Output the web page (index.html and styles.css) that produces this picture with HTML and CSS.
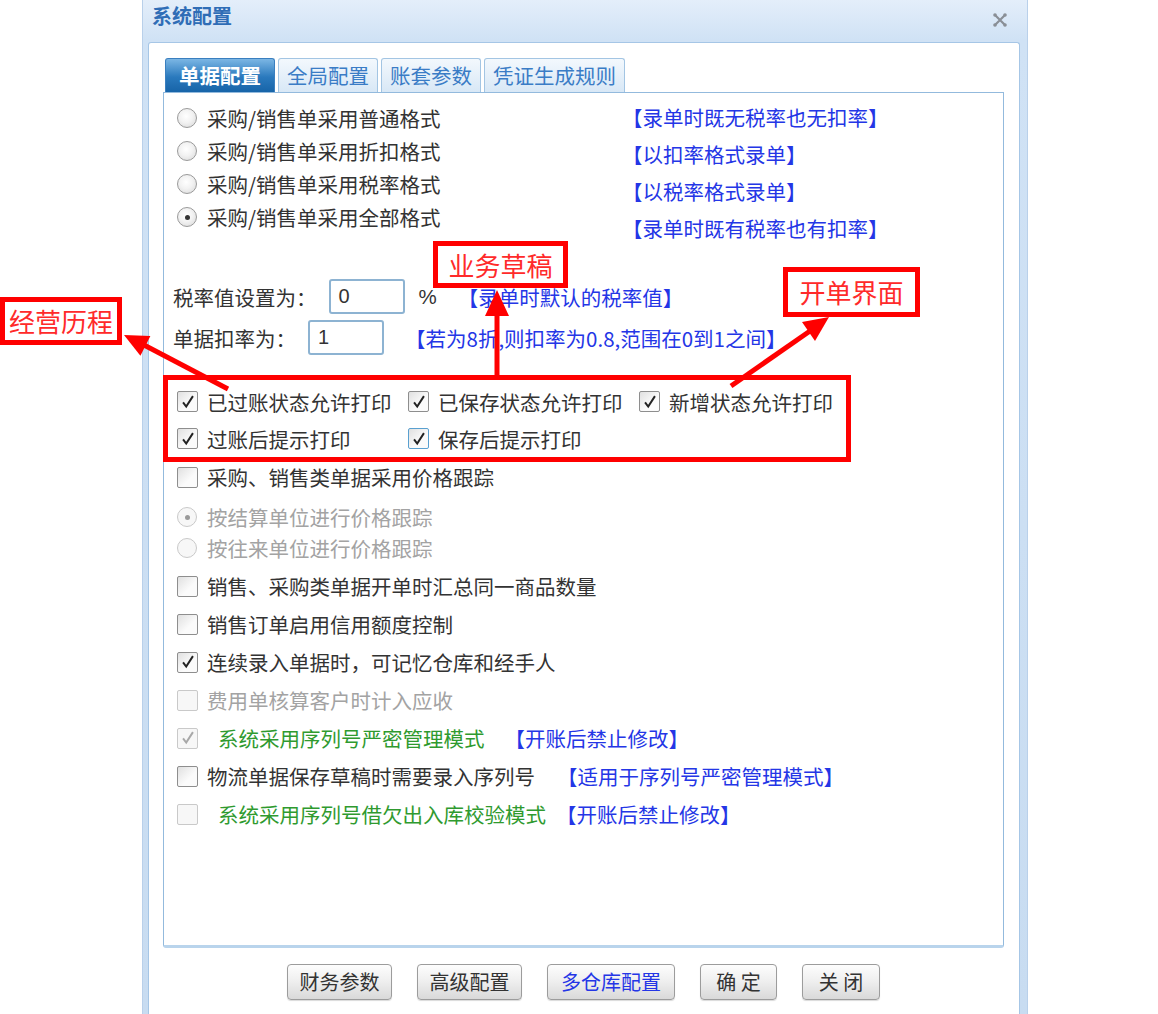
FILE: index.html
```html
<!DOCTYPE html>
<html lang="zh-CN">
<head>
  <meta charset="UTF-8" />
  <title>系统配置</title>
  <link rel="stylesheet" href="styles.css">
</head>
<body>
  <div class="window">
    <div class="titlebar">
      <span class="title">系统配置</span>
      <svg class="close" width="16" height="16" viewBox="0 0 16 16">
        <path d="M3 3 L13 13 M13 3 L3 13" stroke="#8a8f96" stroke-width="2.2" stroke-linecap="round"/>
        <circle cx="3" cy="3" r="1.8" fill="#8a8f96"/><circle cx="13" cy="3" r="1.8" fill="#8a8f96"/>
        <circle cx="3" cy="13" r="1.8" fill="#8a8f96"/><circle cx="13" cy="13" r="1.8" fill="#8a8f96"/>
      </svg>
    </div>

    <div class="content">
      <div class="tabs">
        <div class="tab active">单据配置</div>
        <div class="tab">全局配置</div>
        <div class="tab">账套参数</div>
        <div class="tab">凭证生成规则</div>
      </div>

      <div class="panel">
        <div class="formats">
          <div class="format-opts">
            <div class="opt"><span class="radio"></span>采购/销售单采用普通格式</div>
            <div class="opt"><span class="radio"></span>采购/销售单采用折扣格式</div>
            <div class="opt"><span class="radio"></span>采购/销售单采用税率格式</div>
            <div class="opt"><span class="radio on"></span>采购/销售单采用全部格式</div>
          </div>
          <div class="format-notes">
            <div class="note">【录单时既无税率也无扣率】</div>
            <div class="note">【以扣率格式录单】</div>
            <div class="note">【以税率格式录单】</div>
            <div class="note">【录单时既有税率也有扣率】</div>
          </div>
        </div>

        <div class="field tax">
          <span class="field-label">税率值设置为：</span>
          <span class="input">0</span>
          <span class="unit">%</span>
          <span class="note">【录单时默认的税率值】</span>
        </div>
        <div class="field">
          <span class="field-label">单据扣率为：</span>
          <span class="input">1</span>
          <span class="note">【若为8折,则扣率为0.8,范围在0到1之间】</span>
        </div>

        <div class="print-group">
          <div class="print-grid">
            <div class="opt"><span class="cb on"><svg viewBox="0 0 20 20"><path d="M4.5 10.5 L8 15 L15.5 3.5"/></svg></span>已过账状态允许打印</div>
            <div class="opt"><span class="cb on"><svg viewBox="0 0 20 20"><path d="M4.5 10.5 L8 15 L15.5 3.5"/></svg></span>已保存状态允许打印</div>
            <div class="opt"><span class="cb on"><svg viewBox="0 0 20 20"><path d="M4.5 10.5 L8 15 L15.5 3.5"/></svg></span>新增状态允许打印</div>
            <div class="opt"><span class="cb on"><svg viewBox="0 0 20 20"><path d="M4.5 10.5 L8 15 L15.5 3.5"/></svg></span>过账后提示打印</div>
            <div class="opt"><span class="cb on focus"><svg viewBox="0 0 20 20"><path d="M4.5 10.5 L8 15 L15.5 3.5"/></svg></span>保存后提示打印</div>
          </div>
          <div class="mark-frame"></div>
        </div>

        <div class="opt row first"><span class="cb"></span>采购、销售类单据采用价格跟踪</div>
        <div class="opt sub disabled"><span class="radio on"></span>按结算单位进行价格跟踪</div>
        <div class="opt sub disabled"><span class="radio"></span>按往来单位进行价格跟踪</div>
        <div class="opt row after-sub"><span class="cb"></span>销售、采购类单据开单时汇总同一商品数量</div>
        <div class="opt row"><span class="cb"></span>销售订单启用信用额度控制</div>
        <div class="opt row"><span class="cb on"><svg viewBox="0 0 20 20"><path d="M4.5 10.5 L8 15 L15.5 3.5"/></svg></span>连续录入单据时，可记忆仓库和经手人</div>
        <div class="opt row disabled"><span class="cb"></span>费用单核算客户时计入应收</div>
        <div class="opt row disabled"><span class="cb on"><svg viewBox="0 0 20 20"><path d="M4.5 10.5 L8 15 L15.5 3.5"/></svg></span><span class="green">系统采用序列号严密管理模式</span><span class="note">【开账后禁止修改】</span></div>
        <div class="opt row"><span class="cb"></span>物流单据保存草稿时需要录入序列号<span class="note spaced">【适用于序列号严密管理模式】</span></div>
        <div class="opt row disabled"><span class="cb"></span><span class="green tight">系统采用序列号借欠出入库校验模式</span><span class="note">【开账后禁止修改】</span></div>
      </div>

      <div class="buttons">
        <span class="btn w105">财务参数</span>
        <span class="btn w105">高级配置</span>
        <span class="btn w128 blue">多仓库配置</span>
        <span class="btn w77">确 定</span>
        <span class="btn w78">关 闭</span>
      </div>
    </div>
  </div>

  <!-- annotations drawn over the screenshot -->
  <div class="callout callout-history">经营历程</div>
  <div class="callout callout-draft">业务草稿</div>
  <div class="callout callout-open">开单界面</div>

  <svg class="arrows" width="1158" height="1014" viewBox="0 0 1158 1014">
    <g stroke="#ff0000" stroke-width="5" fill="#ff0000">
      <line x1="228" y1="389" x2="144" y2="345"/>
      <polygon points="124,335 150.4,336.1 140.4,355.7" stroke="none"/>
      <line x1="497" y1="380" x2="497" y2="312"/>
      <polygon points="497,290 485,316 509,316" stroke="none"/>
      <line x1="731" y1="386" x2="810" y2="331"/>
      <polygon points="829,317 815,341 802,322" stroke="none"/>
    </g>
  </svg>
</body>
</html>
```

FILE: styles.css
```css
body {
  margin: 0;
  background: #ffffff;
  font-family: "Noto Sans CJK SC", "Noto Sans", sans-serif;
  color: #333;
  position: relative;
  height: 1014px;
  overflow: hidden;
}

.window {
  margin-left: 142px;
  width: 886px;
  height: 1014px;
  background: linear-gradient(#e4eefa 0, #d0e2f5 40px, #c8dcf1 100%);
  border-left: 1px solid #b9d0ea;
  border-right: 1px solid #b9d0ea;
  box-sizing: border-box;
  overflow: hidden;
}

.titlebar {
  height: 42px;
  display: flex;
  align-items: flex-start;
  justify-content: space-between;
  padding: 3px 19px 0 9px;
  box-sizing: border-box;
}

.title {
  font-size: 20px;
  line-height: 26px;
  font-weight: bold;
  color: #2f6db6;
}

.close {
  margin-top: 9px;
}

.content {
  margin: 0 7px 0 5px;
  height: 972px;
  background: #fff;
  border: 1px solid #a6c6e6;
  border-bottom: none;
  border-radius: 3px 3px 0 0;
  padding: 15px 15px 0 14px;
  box-sizing: border-box;
}

/* tabs */
.tabs {
  display: flex;
  gap: 3px;
  margin-left: 2px;
  height: 34px;
}

.tab {
  padding: 0 8px;
  font-size: 20.5px;
  line-height: 32px;
  color: #3a7cc6;
  background: linear-gradient(#f3f8fd, #d8e8f6);
  border: 1px solid #a3c5e3;
  border-bottom: none;
  border-radius: 3px 3px 0 0;
}

.tab.active {
  padding: 0 13px;
  color: #fff;
  font-weight: bold;
  background: linear-gradient(#7bb6e4, #2a79bd 55%, #1764a8);
  border-color: #3a7fbf;
}

.panel {
  height: 856px;
  border: 1px solid #93badd;
  border-bottom: 3px solid #b9d4ec;
  border-radius: 0 0 3px 3px;
  padding: 8px 0 0 13px;
  box-sizing: border-box;
  font-size: 20.5px;
}

.note {
  color: #2436e6;
}

.green {
  color: #2f9a2f;
  margin-left: 11px;
  margin-right: 20px;
}

.green.tight {
  margin-right: 10px;
}

/* radio and checkbox glyphs */
.radio {
  width: 20px;
  height: 20px;
  border-radius: 50%;
  border: 1px solid #9a9a9a;
  background: radial-gradient(circle at 45% 40%, #ffffff 0, #f2f2f2 45%, #d6d6d6 100%);
  box-sizing: border-box;
  flex: none;
  margin-right: 10px;
  position: relative;
}

.radio.on::after {
  content: "";
  position: absolute;
  left: 7px;
  top: 7px;
  width: 5px;
  height: 5px;
  border-radius: 50%;
  background: #333;
}

.cb {
  width: 21px;
  height: 21px;
  border: 1px solid #8e8e8e;
  border-radius: 2px;
  background: linear-gradient(135deg, #e0e0e0, #fbfbfb 60%);
  box-sizing: border-box;
  flex: none;
  margin-right: 9px;
  display: flex;
  align-items: center;
  justify-content: center;
}

.cb svg {
  width: 18px;
  height: 18px;
}

.cb path {
  fill: none;
  stroke: #222;
  stroke-width: 2.2;
}

.cb.focus {
  border-color: #5aa0d0;
}

.opt {
  display: flex;
  align-items: center;
  white-space: nowrap;
}

.disabled {
  color: #a3a3a3;
}

.disabled .cb,
.disabled .radio {
  border-color: #c9c9c9;
  background: #f7f7f7;
}

.disabled .cb path {
  stroke: #a8a8a8;
}

.disabled .radio.on::after {
  background: #9a9a9a;
}

/* document formats */
.formats {
  display: flex;
}

.format-opts {
  width: 445px;
}

.format-opts .opt {
  height: 33px;
}

.format-notes {
  margin-top: -2px;
}

.format-notes .note {
  height: 37px;
  line-height: 37px;
}

/* numeric fields */
.field {
  display: flex;
  align-items: center;
  height: 41px;
  margin-left: -4px;
}

.field.tax {
  margin-top: 29px;
}

.input {
  margin-left: 12px;
  width: 76px;
  height: 35px;
  border: 2px solid #8db3d2;
  border-radius: 3px;
  box-sizing: border-box;
  padding-left: 8px;
  font-family: "Liberation Sans", sans-serif;
  font-size: 20px;
  line-height: 31px;
}

.unit {
  margin-left: 14px;
  margin-right: 21px;
  font-family: "Liberation Sans", sans-serif;
}

.field .note {
  margin-left: 21px;
}

.field.tax .note {
  margin-left: 0;
}

/* print options (marked in red) */
.print-group {
  position: relative;
  margin: 17px 0 0 -14px;
  padding: 8px 0 1px 14px;
  width: 688px;
  box-sizing: border-box;
}

.print-grid {
  display: grid;
  grid-template-columns: 231px 231px auto;
}

.print-grid .opt {
  height: 37px;
}

.mark-frame {
  position: absolute;
  left: 0;
  top: 0;
  right: 0;
  bottom: -4px;
  border: 5px solid #ff0000;
}

/* list of options */
.row {
  height: 38px;
}

.row.after-sub {
  margin-top: 4px;
}

.sub {
  height: 31px;
}

.row.first + .sub {
  margin-top: 5px;
}

.note.spaced {
  margin-left: 22px;
}

/* buttons */
.buttons {
  display: flex;
  justify-content: center;
  gap: 25px;
  margin-top: 16px;
}

.btn {
  height: 36px;
  border: 1px solid #9c9c9c;
  border-radius: 4px;
  background: linear-gradient(#fdfdfd, #eeeeee 50%, #d9d9d9);
  box-sizing: border-box;
  font-size: 20px;
  line-height: 33px;
  text-align: center;
  color: #333;
  box-shadow: 0 1px 1px rgba(0, 0, 0, 0.15);
}

.btn.blue { color: #2436e6; }
.w105 { width: 105px; }
.w128 { width: 128px; }
.w77 { width: 77px; }
.w78 { width: 78px; }

/* annotations */
.callout {
  position: absolute;
  background: #fff;
  border: 5px solid #ff0000;
  color: #ff2a2a;
  font-size: 26px;
  line-height: 38px;
  text-align: center;
  box-sizing: border-box;
}

.callout-history {
  left: 0;
  top: 297px;
  width: 122px;
  height: 48px;
}

.callout-draft {
  left: 433px;
  top: 241px;
  width: 135px;
  height: 47px;
}

.callout-open {
  left: 783px;
  top: 267px;
  width: 137px;
  height: 50px;
  line-height: 40px;
}

.arrows {
  position: absolute;
  left: 0;
  top: 0;
  pointer-events: none;
}
```
